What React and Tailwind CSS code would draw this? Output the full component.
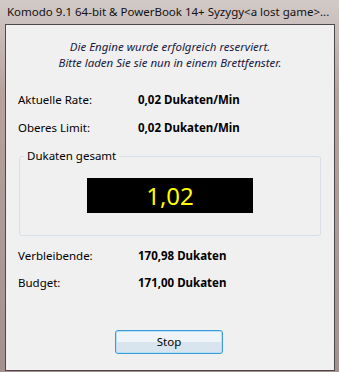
export default function App() {
  const font = { fontFamily: '"Noto Sans", "Open Sans", sans-serif' };
  return (
    <div
      className="w-[339px] h-[372px] overflow-hidden bg-gradient-to-b from-[#d2cac8] via-[#b7a29d] via-25% to-[#a4918d] text-black"
      style={font}
    >
      <div className="h-[24px] pl-[7px] text-[11.5px] leading-[24px] whitespace-nowrap text-[#111]">
        Komodo 9.1 64-bit &amp; PowerBook 14+ Syzygy&lt;a lost game&gt;...
      </div>
      <div className="ml-[5px] w-[330px] h-[347px] border border-[#4e4848] bg-[#f0f0f0] flex flex-col text-[11.5px] leading-[16px]">
        <div className="pt-[14px] text-center italic text-[#1a1a40]">
          <div>Die Engine wurde erfolgreich reserviert.</div>
          <div>Bitte laden Sie sie nun in einem Brettfenster.</div>
        </div>
        <div className="mt-[21px] flex pl-[12px]">
          <div className="w-[120px]">Aktuelle Rate:</div>
          <div className="font-bold">0,02 Dukaten/Min</div>
        </div>
        <div className="mt-[12px] flex pl-[12px]">
          <div className="w-[120px]">Oberes Limit:</div>
          <div className="font-bold">0,02 Dukaten/Min</div>
        </div>
        <fieldset className="mt-[12px] ml-[13px] w-[302px] border border-[#d5dfe5] rounded-[3px] pb-[22px] pt-[14px]">
          <legend className="ml-[4px] px-[3px] leading-[16px]">Dukaten gesamt</legend>
          <div className="mx-auto w-[166px] h-[35px] bg-black flex items-center justify-center text-[#ffff00] text-[24px] leading-none">
            1,02
          </div>
        </fieldset>
        <div className="mt-[12px] flex pl-[12px]">
          <div className="w-[120px]">Verbleibende:</div>
          <div className="font-bold">170,98 Dukaten</div>
        </div>
        <div className="mt-[11px] flex pl-[12px]">
          <div className="w-[120px]">Budget:</div>
          <div className="font-bold">171,00 Dukaten</div>
        </div>
        <div className="mt-[39px] flex pl-[109px]">
          <button className="w-[108px] h-[24px] rounded-[3px] border border-[#3c9ad8] bg-gradient-to-b from-[#eef4f8] from-50% to-[#d8e5ee] to-50% shadow-[inset_0_0_0_1px_#b5e0f7] text-[11.5px] text-black">
            Stop
          </button>
        </div>
      </div>
    </div>
  );
}
